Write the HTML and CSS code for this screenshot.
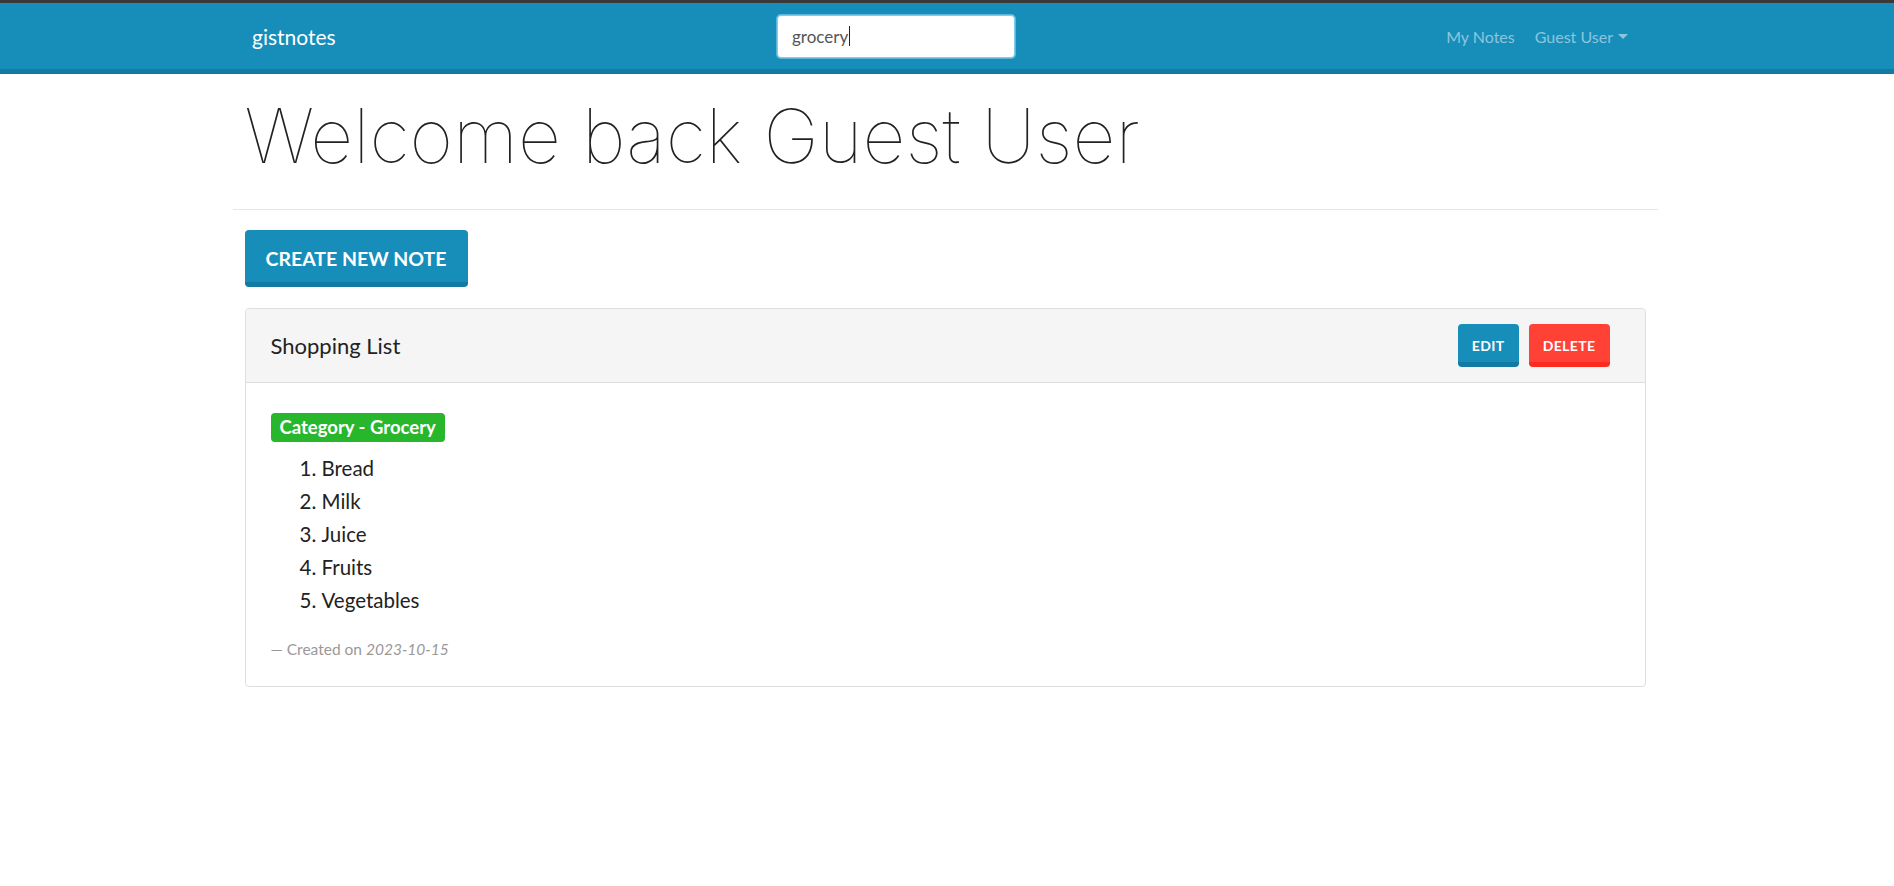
FILE: index.html
```html
<!DOCTYPE html>
<html lang="en">
<head>
<meta charset="utf-8">
<title>gistnotes</title>
<link rel="stylesheet" href="styles.css">
</head>
<body>
<header class="navbar">
  <div class="nav-inner">
    <a class="brand" href="#">gistnotes</a>
    <div class="search-box" role="searchbox"><span class="search-text">grocery</span><span class="text-caret"></span></div>
    <nav class="nav-right">
      <a class="nav-link" href="#">My Notes</a>
      <a class="nav-link dropdown-toggle" href="#">Guest User</a>
    </nav>
  </div>
</header>
<main class="main">
  <div class="page">
    <h1 class="welcome">Welcome back Guest User</h1>
    <hr class="divider">
    <div class="content">
      <button class="btn btn-primary btn-lg">Create New Note</button>
      <section class="card">
        <div class="card-header">
          <span class="card-title">Shopping List</span>
          <div class="card-actions">
            <button class="btn btn-primary btn-sm">Edit</button>
            <button class="btn btn-danger btn-sm">Delete</button>
          </div>
        </div>
        <div class="card-body">
          <span class="badge">Category - Grocery</span>
          <ol class="items">
            <li>Bread</li>
            <li>Milk</li>
            <li>Juice</li>
            <li>Fruits</li>
            <li>Vegetables</li>
          </ol>
          <p class="created">— Created on <em>2023-10-15</em></p>
        </div>
      </section>
    </div>
  </div>
</main>
</body>
</html>
```
FILE: styles.css
```css
* { box-sizing: border-box; }

body {
  margin: 0;
  font-family: Lato, "Open Sans", "Liberation Sans", sans-serif;
  color: #222;
  background: #fff;
}

a { text-decoration: none; }

.navbar {
  height: 74px;
  padding-right: 4px;
  background: #178dba;
  border-top: 3px solid #3a3a3a;
  border-bottom: 5px solid #137ba3;
}

.nav-inner {
  max-width: 1400px;
  height: 100%;
  margin: 0 auto;
  display: flex;
  align-items: center;
}

.brand {
  flex: 0 0 532px;
  padding-left: 7px;
  font-size: 21px;
  color: #fff;
}

.search-box {
  width: 238px;
  height: 43px;
  display: flex;
  align-items: center;
  padding-left: 14px;
  background: #fff;
  border: 1px solid #7fcbeb;
  border-radius: 4px;
  box-shadow: 0 0 0 1px rgba(140, 210, 240, 0.6);
  font-size: 17px;
  color: #555;
}

.text-caret {
  display: inline-block;
  width: 1px;
  height: 20px;
  margin-left: 1px;
  background: #222;
}

.nav-right {
  margin-left: auto;
  padding-right: 17px;
  display: flex;
  gap: 20px;
}

.nav-link {
  font-size: 16px;
  color: rgba(255, 255, 255, 0.5);
}

.dropdown-toggle::after {
  content: "";
  display: inline-block;
  margin-left: 5px;
  vertical-align: 4px;
  border-top: 5px solid;
  border-left: 5px solid transparent;
  border-right: 5px solid transparent;
}

.main {
  padding-right: 4px;
}

.page {
  max-width: 1425px;
  margin: 0 auto;
}

.welcome {
  margin: 14px 12px 0;
  font-family: Inter, Lato, sans-serif;
  font-size: 75px;
  font-weight: 100;
  line-height: 96px;
  color: #222;
}

.divider {
  margin: 25px 0 0;
  border: 0;
  border-top: 1px solid #e6e6e6;
}

.content {
  padding: 20px 12px 0;
}

.btn {
  font-family: inherit;
  font-weight: 700;
  text-transform: uppercase;
  color: #fff;
  border: 0;
  border-radius: 4px;
  cursor: pointer;
}

.btn-primary {
  background: #178dba;
  border-bottom: 5px solid #137ba3;
}

.btn-danger {
  background: #ff4136;
  border-bottom: 5px solid #ff2a1e;
}

.btn-lg {
  height: 57px;
  padding: 5px 21px 0;
  font-size: 19.5px;
}

.btn-sm {
  height: 43px;
  padding: 5px 14px 0;
  font-size: 14px;
  letter-spacing: 0.4px;
}

.card {
  margin-top: 21px;
  border: 1px solid #dedede;
  border-radius: 4px;
}

.card-header {
  height: 74px;
  display: flex;
  align-items: center;
  justify-content: space-between;
  padding: 0 35px 0 25px;
  background: #f5f5f5;
  border-bottom: 1px solid #dedede;
  border-radius: 4px 4px 0 0;
}

.card-title {
  font-size: 22px;
  color: #222;
}

.card-actions {
  display: flex;
  gap: 10px;
}

.card-body {
  padding: 30px 25px 25px;
}

.badge {
  display: inline-block;
  height: 29px;
  padding: 0 9px;
  line-height: 29px;
  font-size: 18.5px;
  font-weight: 700;
  color: #fff;
  background: #28b62c;
  border-radius: 4px;
}

.items {
  margin: 10px 0 0;
  padding-left: 51px;
  font-size: 20.5px;
  line-height: 33px;
  color: #222;
}

.created {
  margin: 20px 0 0;
  font-size: 15.5px;
  line-height: 24px;
  color: #999;
}
```
